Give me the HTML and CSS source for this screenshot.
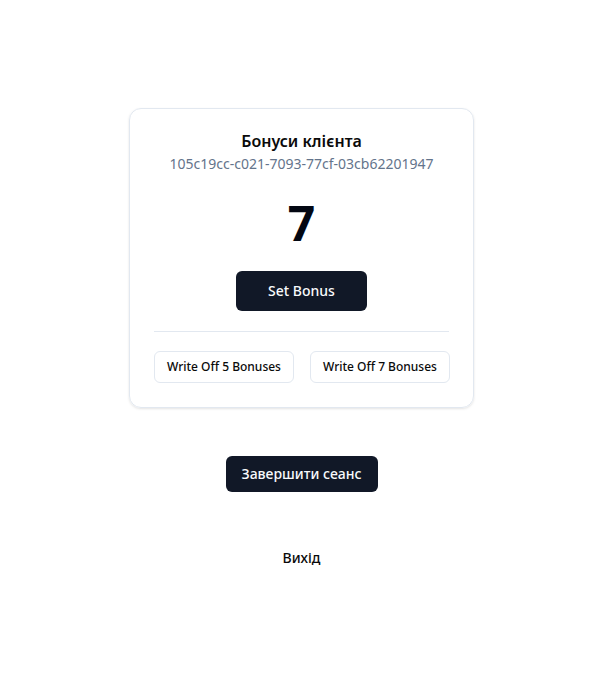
FILE: index.html
```html
<!DOCTYPE html>
<html lang="uk">
<head>
<meta charset="utf-8">
<title>Бонуси клієнта</title>
<link rel="stylesheet" href="styles.css">
</head>
<body>
<main class="page">
  <section class="card">
    <h1 class="title">Бонуси клієнта</h1>
    <p class="client-id">105c19cc-c021-7093-77cf-03cb62201947</p>
    <div class="amount">7</div>
    <button class="btn btn-primary btn-lg">Set Bonus</button>
    <hr class="divider">
    <div class="writeoffs">
      <button class="btn btn-outline btn-sm">Write Off 5 Bonuses</button>
      <button class="btn btn-outline btn-sm">Write Off 7 Bonuses</button>
    </div>
  </section>
  <button class="btn btn-primary btn-md">Завершити сеанс</button>
  <button class="btn btn-ghost btn-md">Вихід</button>
</main>
</body>
</html>
```
FILE: styles.css
```css
* { box-sizing: border-box; }
html, body { margin: 0; padding: 0; }
body {
  font-family: "Noto Sans", "Open Sans", sans-serif;
  color: #0a0a0a;
  background: #ffffff;
}
.page {
  min-height: 100vh;
  display: flex;
  flex-direction: column;
  align-items: center;
  justify-content: center;
  gap: 48px;
}
.card {
  width: 345px;
  border: 1px solid #e2e8f0;
  border-radius: 12px;
  box-shadow: 0 1px 3px rgba(0,0,0,0.08), 0 1px 2px rgba(0,0,0,0.04);
  padding: 20px 24px 24px;
  display: flex;
  flex-direction: column;
  align-items: center;
}
.title {
  margin: 0 0 1px;
  font-size: 16px;
  line-height: 24px;
  font-weight: 600;
  color: #0a0a0a;
}
.client-id {
  margin: 0;
  font-size: 14px;
  line-height: 20px;
  color: #64748b;
}
.amount {
  margin: 25px 0 24px;
  font-size: 48px;
  line-height: 48px;
  font-weight: 700;
  color: #030712;
}
.btn {
  font-family: inherit;
  border-radius: 6px;
  cursor: pointer;
  display: inline-flex;
  align-items: center;
  justify-content: center;
  white-space: nowrap;
}
.btn-primary {
  background: #111827;
  color: #f8fafc;
  border: none;
  font-weight: 500;
}
.btn-lg {
  height: 40px;
  padding: 0 32px;
  font-size: 14px;
}
.btn-md {
  height: 36px;
  padding: 0 16px;
  font-size: 14px;
}
.btn-outline {
  background: #fff;
  border: 1px solid #e2e8f0;
  color: #0a0a0a;
  font-weight: 500;
}
.btn-sm {
  height: 32px;
  padding: 0 12px;
  font-size: 12px;
}
.btn-ghost {
  background: transparent;
  border: none;
  color: #0a0a0a;
  font-weight: 500;
}
.divider {
  width: 100%;
  border: none;
  border-top: 1px solid #e2e8f0;
  margin: 20px 0 19px;
}
.writeoffs {
  width: 100%;
  display: flex;
  justify-content: space-between;
  gap: 16px;
}
```
